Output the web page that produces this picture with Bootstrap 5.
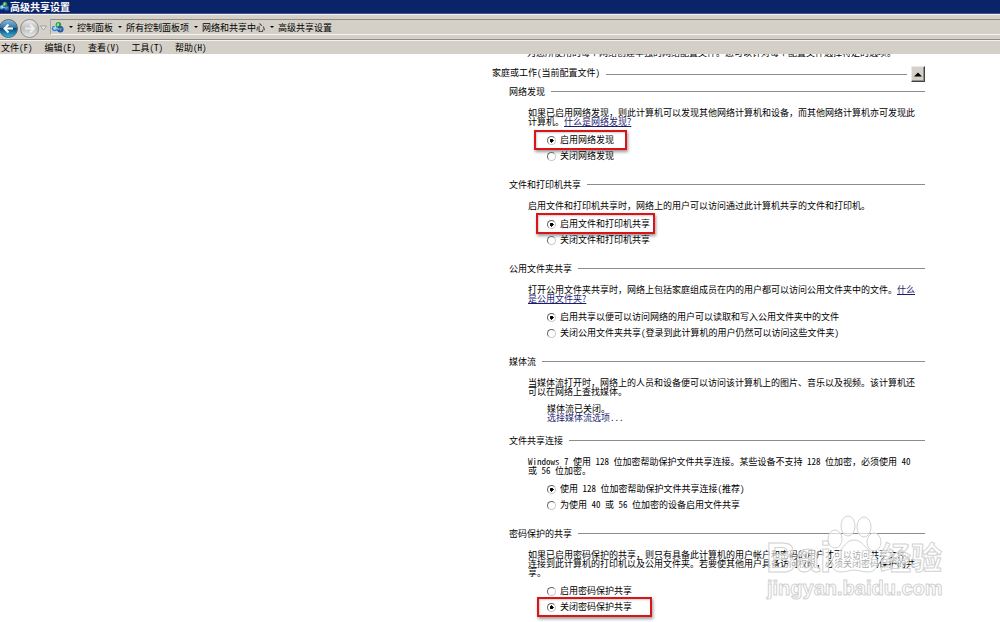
<!DOCTYPE html>
<html lang="zh-CN">
<head>
<meta charset="utf-8">
<meta name="viewport" content="width=device-width, initial-scale=1">
<title>高级共享设置</title>
<link href="https://cdn.jsdelivr.net/npm/bootstrap@5.3.0/dist/css/bootstrap.min.css" rel="stylesheet">
<style>
  body { font: 9px/9px "Noto Sans CJK SC", sans-serif; font-feature-settings: "hwid"; color: #000; background: #fff; }
  h1, h2, h3, p { font-size: 9px; line-height: 9px; font-weight: 400; margin: 0; }
  h1, h2, h3, p, label, a { white-space: nowrap; }
  /* full-width punctuation in prose, half-width Latin elsewhere */
  .prose { font-feature-settings: normal; }
  .titlebar { height: 14px; background: #0a246a; color: #fff; border-bottom: 1px solid #44548a; }
  .titlebar h1 { font-size: 10px; line-height: 13px; font-weight: 700; margin-left: 1px; }
  .chrome { background: #d4d0c8; }
  .navrow { height: 26px; padding-top: 4px; border-top: 1px solid #f4f2ee; border-bottom: 1px solid #8f8d88; }
  .navbtn { width: 20px; height: 20px; padding: 0; border: 0; background: none; }
  .navbtn svg, .caret svg { display: block; }
  .caret { width: 7px; height: 9px; padding: 0; border: 0; background: none; }
  .crumbs { height: 16px; margin-left: 3px; border: 1px solid #aaa7a0; border-top-color: #8d8b86; border-right: 0; border-bottom-color: #f6f4f0; }
  .crumbs a { color: #000; text-decoration: none; }
  .crumbs .sep { width: 13px; display: flex; justify-content: center; }
  .sep::before { content: ""; border: 2px solid transparent; border-top-color: #000; border-bottom: 0; }
  .menurow { height: 14px; border-top: 1px solid #f4f2ee; padding-left: 1px; gap: 12px; }
  .menurow button { font-size: 9px; line-height: 13px; padding: 0; border: 0; background: none; color: #000; white-space: nowrap; font-feature-settings: inherit; }
  .settings { width: 100%; max-width: 433px; margin-left: auto; margin-right: 75px; padding-bottom: 8px; position: relative; }
  .clipped { height: 3px; overflow: hidden; padding-left: 35px; }
  .profile { height: 16px; margin: 9px 0 5px; }
  .profile h2 { padding-bottom: 4px; }
  .rule { flex: 1; height: 1px; background: #8c8c8c; margin-left: 6px; }
  .fold { width: 14px; height: 16px; padding: 0; margin-left: 4px; border: 1px solid; border-color: #eceae6 #404040 #404040 #eceae6; background: #d4d0c8; box-shadow: inset -1px -1px #94918b; }
  .part { padding-left: 17px; margin-bottom: 16px; }
  .part h3 { margin-bottom: 12px; }
  .part .detail { padding-left: 19px; }
  .options { margin-top: 6px; padding-left: 19px; }
  .option { height: 16px; gap: 4px; width: max-content; position: relative; }
  .option label { line-height: 16px; }
  .option input { appearance: none; width: 9px; height: 9px; margin: 0; border: 1px solid; border-color: #666 #c8c8c8 #c8c8c8 #666; border-radius: 50%; background: #fff; }
  .option input:checked { background: radial-gradient(circle, #000 0 1px, #333 2px, #fff 2px); }
  .detail a { color: #1c1c70; text-decoration: underline; }
  .media { margin-bottom: 14px; }
  .media .status { margin-top: 8px; padding-left: 19px; }
  .media .status a { text-decoration: none; }
  .ring::after { content: ""; position: absolute; inset: -2px -13px -2px -13px; border: 2px solid #dc1418; box-shadow: 1px 2px 3px #0006, inset 1px 1px 2px #0003; pointer-events: none; }
  .ring-files::after { inset: -3px -5px -2px -11px; }
  .ring-password::after { inset: -2px -20px -2px -10px; }
  .watermark { position: absolute; right: -22px; bottom: 18px; width: 184px; height: 90px; pointer-events: none; }
</style>
</head>
<body class="min-vh-100">
<svg width="0" height="0" class="position-absolute" aria-hidden="true">
  <symbol id="share" viewBox="0 0 14 14">
    <circle cx="4" cy="8" r="3" fill="#2d7fd0"/><path d="M2 7l3-1 1 3-3 1z" fill="#9ad4ef"/>
    <circle cx="8" cy="4" r="3" fill="#249f45"/><path d="M7 2l2 1-1 3-2-1z" fill="#a6e383"/>
    <circle cx="10" cy="9" r="3.500" fill="#2c55b8"/><path d="M9 7l3 1-2 3z" fill="#55b86a"/>
    <path d="M4 5l2 3 3 1" stroke="#cfeaf9" fill="none"/>
  </symbol>
</svg>
<header>
  <div class="titlebar d-flex align-items-center">
    <svg width="9" height="11" class="flex-shrink-0" viewBox="2 0 11 14" aria-hidden="true"><use href="#share" width="14" height="14"/></svg>
    <h1>高级共享设置</h1>
  </div>
  <div class="chrome">
    <nav class="navrow d-flex align-items-start" aria-label="地址">
      <button class="navbtn" aria-label="后退"><svg width="20" height="20" viewBox="0 0 20 20">
        <defs><linearGradient id="blue" x2="0" y2="1"><stop stop-color="#8ebfdc"/><stop offset=".48" stop-color="#2c709f"/><stop offset=".5" stop-color="#07467c"/><stop offset="1" stop-color="#35bee6"/></linearGradient>
        <linearGradient id="grey" x2="0" y2="1"><stop stop-color="#eeeeed"/><stop offset=".5" stop-color="#bdbdbd"/><stop offset="1" stop-color="#e9e9e9"/></linearGradient></defs>
        <circle cx="8.500" cy="9.500" r="9" fill="url(#blue)" stroke="#546b7c"/><path d="M13 9.500H4.500M8.500 5.500l-4 4 4 4" fill="none" stroke="#fff" stroke-width="2"/></svg></button>
      <button class="navbtn" aria-label="前进"><svg width="20" height="20" viewBox="0 0 20 20"><circle cx="9.500" cy="9.500" r="9" fill="url(#grey)" stroke="#8d8d8d"/><path d="M5 9.500h8M10 5.500l4 4-4 4" fill="none" stroke="#eee" stroke-width="2"/></svg></button>
      <button class="caret mt-1" aria-label="最近页面"><svg width="7" height="9" viewBox="0 0 7 9"><path d="M.5 3h6L3.500 7z" fill="#eee" stroke="#888" stroke-width=".7"/></svg></button>
      <div class="crumbs d-flex align-items-center flex-grow-1">
        <svg width="13" height="13" class="flex-shrink-0" aria-hidden="true"><use href="#share" width="13" height="13"/></svg>
        <span class="sep"></span><a href="#">控制面板</a>
        <span class="sep"></span><a href="#">所有控制面板项</a>
        <span class="sep"></span><a href="#">网络和共享中心</a>
        <span class="sep"></span><a href="#">高级共享设置</a>
      </div>
    </nav>
    <div class="menurow d-flex">
      <button>文件(F)</button><button>编辑(E)</button><button>查看(V)</button><button>工具(T)</button><button>帮助(H)</button>
    </div>
  </div>
</header>
<main class="settings">
  <div class="clipped d-flex align-items-end"><p class="prose">为您所使用的每个网络创建单独的网络配置文件。您可以针对每个配置文件选择特定的选项。</p></div>
  <div class="profile d-flex align-items-center">
    <h2>家庭或工作(当前配置文件)</h2><span class="rule"></span>
    <button class="fold" aria-label="折叠"><svg class="d-block mx-auto" width="8" height="5" viewBox="0 0 8 5"><path d="M0 4.500L4 .5l4 4z"/></svg></button>
  </div>

  <section class="part">
    <h3 class="d-flex align-items-center">网络发现<span class="rule"></span></h3>
    <div class="detail">
      <p class="prose">如果已启用网络发现，则此计算机可以发现其他网络计算机和设备，而其他网络计算机亦可发现此<br>计算机。<a href="#">什么是网络发现?</a></p>
      <div class="options">
        <div class="option ring d-flex align-items-center"><input type="radio" name="discovery" id="d1" checked><label for="d1">启用网络发现</label></div>
        <div class="option d-flex align-items-center"><input type="radio" name="discovery" id="d2"><label for="d2">关闭网络发现</label></div>
      </div>
    </div>
  </section>

  <section class="part">
    <h3 class="d-flex align-items-center">文件和打印机共享<span class="rule"></span></h3>
    <div class="detail">
      <p class="prose">启用文件和打印机共享时，网络上的用户可以访问通过此计算机共享的文件和打印机。</p>
      <div class="options">
        <div class="option ring ring-files d-flex align-items-center"><input type="radio" name="files" id="f1" checked><label for="f1">启用文件和打印机共享</label></div>
        <div class="option d-flex align-items-center"><input type="radio" name="files" id="f2"><label for="f2">关闭文件和打印机共享</label></div>
      </div>
    </div>
  </section>

  <section class="part">
    <h3 class="d-flex align-items-center">公用文件夹共享<span class="rule"></span></h3>
    <div class="detail">
      <p class="prose">打开公用文件夹共享时，网络上包括家庭组成员在内的用户都可以访问公用文件夹中的文件。<a href="#">什么<br>是公用文件夹?</a></p>
      <div class="options">
        <div class="option d-flex align-items-center"><input type="radio" name="public" id="p1" checked><label for="p1">启用共享以便可以访问网络的用户可以读取和写入公用文件夹中的文件</label></div>
        <div class="option d-flex align-items-center"><input type="radio" name="public" id="p2"><label for="p2">关闭公用文件夹共享(登录到此计算机的用户仍然可以访问这些文件夹)</label></div>
      </div>
    </div>
  </section>

  <section class="part media">
    <h3 class="d-flex align-items-center">媒体流<span class="rule"></span></h3>
    <div class="detail">
      <p class="prose">当媒体流打开时，网络上的人员和设备便可以访问该计算机上的图片、音乐以及视频。该计算机还<br>可以在网络上查找媒体。</p>
      <p class="status">媒体流已关闭。<br><a href="#">选择媒体流选项...</a></p>
    </div>
  </section>

  <section class="part">
    <h3 class="d-flex align-items-center">文件共享连接<span class="rule"></span></h3>
    <div class="detail">
      <p>Windows 7 使用 128 位加密帮助保护文件共享连接。某些设备不支持 128 位加密<span class="prose">，</span>必须使用 40<br>或 56 位加密。</p>
      <div class="options">
        <div class="option d-flex align-items-center"><input type="radio" name="crypt" id="c1" checked><label for="c1">使用 128 位加密帮助保护文件共享连接(推荐)</label></div>
        <div class="option d-flex align-items-center"><input type="radio" name="crypt" id="c2"><label for="c2">为使用 40 或 56 位加密的设备启用文件共享</label></div>
      </div>
    </div>
  </section>

  <section class="part mb-0">
    <h3 class="d-flex align-items-center">密码保护的共享<span class="rule"></span></h3>
    <div class="detail">
      <p class="prose">如果已启用密码保护的共享，则只有具备此计算机的用户帐户和密码的用户才可以访问共享文件、<br>连接到此计算机的打印机以及公用文件夹。若要使其他用户具备访问权限，必须关闭密码保护的共<br>享。</p>
      <div class="options">
        <div class="option d-flex align-items-center"><input type="radio" name="password" id="w1"><label for="w1">启用密码保护共享</label></div>
        <div class="option ring ring-password d-flex align-items-center"><input type="radio" name="password" id="w2" checked><label for="w2">关闭密码保护共享</label></div>
      </div>
    </div>
  </section>

  <svg class="watermark" viewBox="0 0 184 90" fill="#fff" fill-opacity=".65" stroke="#d2d2d2" stroke-width="1">
    <g font-family="Liberation Sans, sans-serif" font-weight="700" style="font-feature-settings:normal">
      <text x="3" y="57" font-size="42">Bai</text>
      <ellipse cx="72" cy="24" rx="7" ry="9"/><ellipse cx="85" cy="11" rx="7" ry="10"/>
      <ellipse cx="101" cy="12" rx="7" ry="10"/><ellipse cx="111" cy="27" rx="7" ry="9"/>
      <path d="M91 25c-8 0-10 8-17 13-8 6-7 19 4 19 6 0 8-2 13-2s8 2 14 2c10 0 13-12 4-19-7-5-10-13-18-13z"/>
      <text x="117" y="54" font-size="31" font-family="Noto Sans CJK SC, sans-serif">经验</text>
      <text x="4" y="80" font-size="20">jingyan.baidu.com</text>
    </g>
  </svg>
</main>
</body>
</html>
